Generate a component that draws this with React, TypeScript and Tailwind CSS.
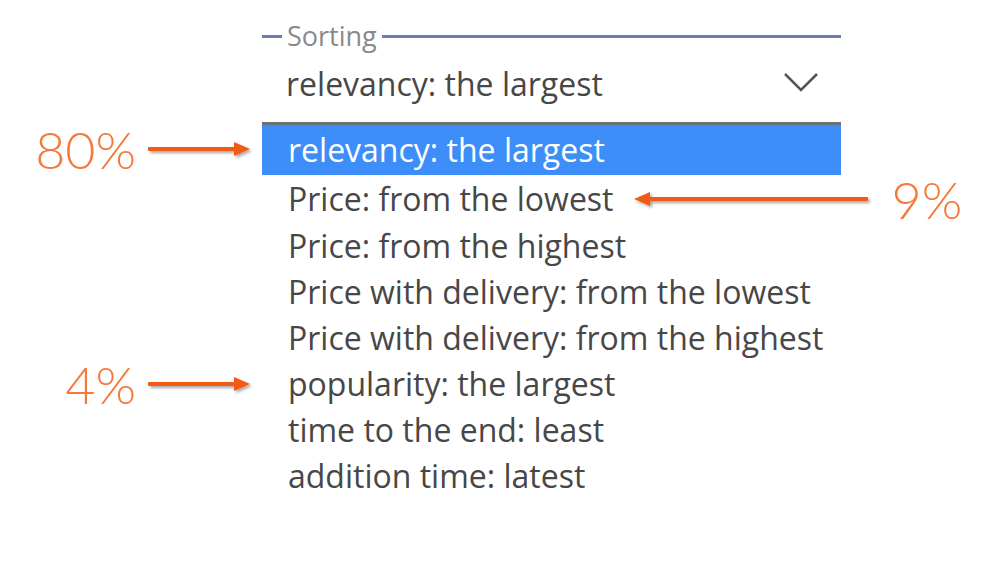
import React from 'react';

const options = [
  'relevancy: the largest',
  'Price: from the lowest',
  'Price: from the highest',
  'Price with delivery: from the lowest',
  'Price with delivery: from the highest',
  'popularity: the largest',
  'time to the end: least',
  'addition time: latest',
];

// Orange callout arrow, drawn left-to-right or right-to-left
const Arrow = ({ width, dir }: { width: number; dir: 'right' | 'left' }) => (
  <svg width={width} height={20} viewBox={`0 0 ${width} 20`} className="overflow-visible">
    <defs>
      <filter id={`sh-${dir}-${width}`} x="-10%" y="-50%" width="120%" height="200%">
        <feDropShadow dx="2" dy="2" stdDeviation="1.5" floodColor="#000" floodOpacity="0.35" />
      </filter>
    </defs>
    <g filter={`url(#sh-${dir}-${width})`} fill="#f25a14" stroke="none">
      {dir === 'right' ? (
        <>
          <rect x={0} y={8} width={width - 14} height={4} rx={1} />
          <polygon points={`${width - 16},3 ${width},10 ${width - 16},17`} />
        </>
      ) : (
        <>
          <rect x={14} y={8} width={width - 14} height={4} rx={1} />
          <polygon points={`16,3 0,10 16,17`} />
        </>
      )}
    </g>
  </svg>
);

const Callout = ({ label }: { label: string }) => (
  <div className="flex items-center justify-end gap-[12px] pr-[12px]">
    <span className="font-['Lato',sans-serif] font-light text-[52px] leading-none text-[#f5793a]">{label}</span>
    <Arrow width={102} dir="right" />
  </div>
);

export default function App() {
  return (
    <div className="w-[1000px] h-[576px] bg-white font-['Open_Sans',sans-serif] text-[#474747] pt-[20px]">
      <div className="grid grid-cols-[262px_579px_1fr]">
        {/* Legend */}
        <div />
        <div className="flex items-center h-[32px]">
          <div className="w-[20px] h-[3px] bg-[#6a7db0]" />
          <span className="px-[5px] text-[27px] leading-none text-[#8a8a8a] -mt-[2px]">Sorting</span>
          <div className="flex-1 h-[3px] bg-[#6a7db0]" />
        </div>
        <div />

        {/* Current value */}
        <div />
        <div className="flex items-center justify-between h-[70px] pl-[24px] pr-[22px] pb-[6px]">
          <span className="text-[32px] leading-none">relevancy: the largest</span>
          <svg width="36" height="22" viewBox="0 0 36 22" fill="none" stroke="#555" strokeWidth="2.5" className="-mt-[4px]">
            <polyline points="2,3 18,19 34,3" />
          </svg>
        </div>
        <div />

        {/* Option list */}
        <div className="flex items-center justify-end h-[53px]">
          <Callout label="80%" />
        </div>
        <div className="border-t-[3px] border-[#6b717c] bg-[#3d8ef8] h-[53px] flex items-center pl-[26px] text-white text-[32px]">
          {options[0]}
        </div>
        <div />

        <div />
        <div className="col-span-2 flex items-center h-[48px] pl-[26px] text-[32px]">
          <span>{options[1]}</span>
          <div className="ml-[20px]">
            <Arrow width={234} dir="left" />
          </div>
          <span className="ml-[24px] font-['Lato',sans-serif] font-light text-[52px] leading-none text-[#f5793a]">9%</span>
        </div>

        {options.slice(2).map((opt) => (
          <React.Fragment key={opt}>
            <div className="flex items-center justify-end h-[46px]">
              {opt === 'popularity: the largest' && <Callout label="4%" />}
            </div>
            <div className="flex items-center h-[46px] pl-[26px] text-[32px]">{opt}</div>
            <div />
          </React.Fragment>
        ))}
      </div>
    </div>
  );
}
